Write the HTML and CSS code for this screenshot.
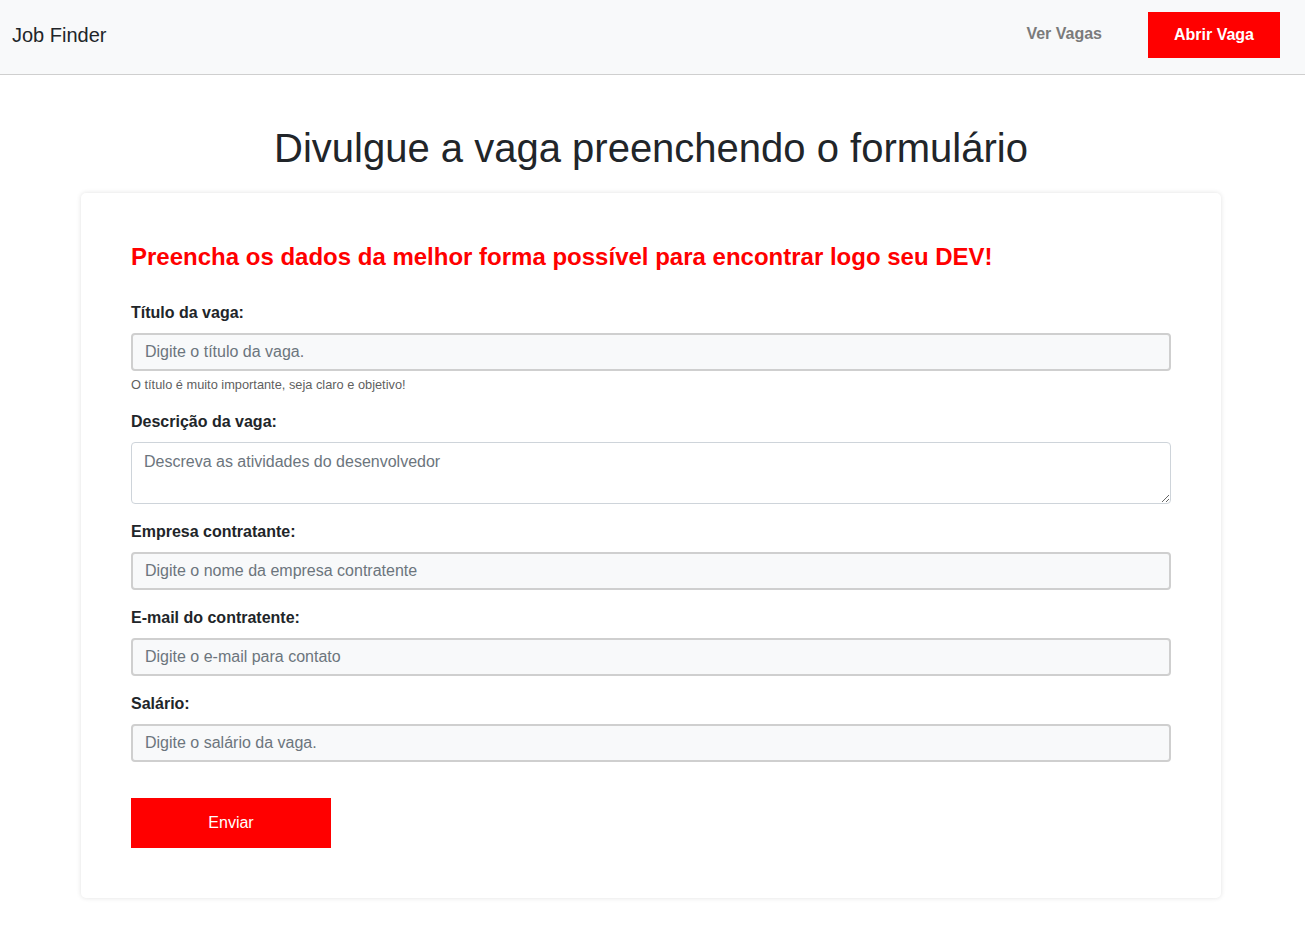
FILE: index.html
```html
<!DOCTYPE html>
<html lang="pt-br">
<head>
<meta charset="utf-8">
<title>Job Finder</title>
<link rel="stylesheet" href="styles.css">
</head>
<body>
<header class="navbar">
  <a class="brand" href="#">Job Finder</a>
  <nav class="nav-links">
    <a class="nav-link" href="#">Ver Vagas</a>
    <a class="nav-btn" href="#">Abrir Vaga</a>
  </nav>
</header>
<main class="main">
  <h1 class="page-title">Divulgue a vaga preenchendo o formulário</h1>
  <section class="card">
    <h2 class="card-title">Preencha os dados da melhor forma possível para encontrar logo seu DEV!</h2>
    <form class="form">
      <div class="field">
        <label class="label" for="title">Título da vaga:</label>
        <input class="input" id="title" type="text" placeholder="Digite o título da vaga.">
        <small class="help">O título é muito importante, seja claro e objetivo!</small>
      </div>
      <div class="field">
        <label class="label" for="desc">Descrição da vaga:</label>
        <textarea class="textarea" id="desc" placeholder="Descreva as atividades do desenvolvedor"></textarea>
      </div>
      <div class="field">
        <label class="label" for="company">Empresa contratante:</label>
        <input class="input" id="company" type="text" placeholder="Digite o nome da empresa contratente">
      </div>
      <div class="field">
        <label class="label" for="email">E-mail do contratente:</label>
        <input class="input" id="email" type="text" placeholder="Digite o e-mail para contato">
      </div>
      <div class="field">
        <label class="label" for="salary">Salário:</label>
        <input class="input" id="salary" type="text" placeholder="Digite o salário da vaga.">
      </div>
      <button class="submit" type="button">Enviar</button>
    </form>
  </section>
</main>
</body>
</html>
```

FILE: styles.css
```css
* { box-sizing: border-box; }
html, body { margin: 0; padding: 0; }
body {
  font-family: "Liberation Sans", Arial, sans-serif;
  font-size: 16px;
  line-height: 1.5;
  color: #212529;
  background: #fff;
}
a { text-decoration: none; }

.navbar {
  height: 75px;
  background: #f8f9fa;
  border-bottom: 1px solid #cfcfcf;
  display: flex;
  align-items: center;
  justify-content: space-between;
  padding: 0 25px 0 12px;
}
.brand {
  font-size: 20px;
  color: #212529;
  line-height: 30px;
  padding-bottom: 4px;
}
.nav-links {
  display: flex;
  align-items: center;
  gap: 46px;
  padding-bottom: 4px;
}
.nav-link {
  color: #7b7b7b;
  font-weight: bold;
  font-size: 16px;
  padding-bottom: 2px;
}
.nav-btn {
  background: #ff0000;
  color: #fff;
  font-weight: bold;
  font-size: 16px;
  width: 132px;
  height: 46px;
  display: flex;
  align-items: center;
  justify-content: center;
}

.main {
  width: 1140px;
  margin-left: calc(50% - 571.5px);
  padding-top: 49px;
  padding-bottom: 48px;
}
.page-title {
  margin: 0 0 21px;
  text-align: center;
  font-weight: normal;
  font-size: 40px;
  line-height: 48px;
  color: #212529;
}
.card {
  background: #fff;
  border-radius: 5px;
  box-shadow: 0 0 5px rgba(0, 0, 0, 0.12);
  padding: 48px 50px 50px;
}
.card-title {
  margin: 0 0 29px;
  color: #ff0000;
  font-size: 24px;
  line-height: 31px;
  font-weight: bold;
}
.form { display: flex; flex-direction: column; }
.field {
  display: flex;
  flex-direction: column;
  margin-bottom: 16px;
}
.label {
  font-weight: bold;
  line-height: 24px;
  margin-bottom: 8px;
  color: #212529;
}
.input {
  height: 38px;
  border: 2px solid #cfcfcf;
  border-radius: 4px;
  background: #f8f9fa;
  padding: 0 12px;
  font-family: inherit;
  font-size: 16px;
  color: #212529;
}
.input::placeholder, .textarea::placeholder { color: #6c757d; opacity: 1; }
.help {
  margin-top: 5px;
  font-size: 12.8px;
  line-height: 18px;
  color: #5f5f5f;
}
.textarea {
  height: 62px;
  border: 1px solid #ced4da;
  border-radius: 4px;
  background: #fff;
  padding: 7px 12px;
  font-family: inherit;
  font-size: 16px;
  line-height: 24px;
  resize: vertical;
  color: #212529;
}
.submit {
  margin-top: 20px;
  width: 200px;
  height: 50px;
  border: 0;
  border-radius: 0;
  background: #ff0000;
  color: #fff;
  font-family: inherit;
  font-size: 16px;
}
```
